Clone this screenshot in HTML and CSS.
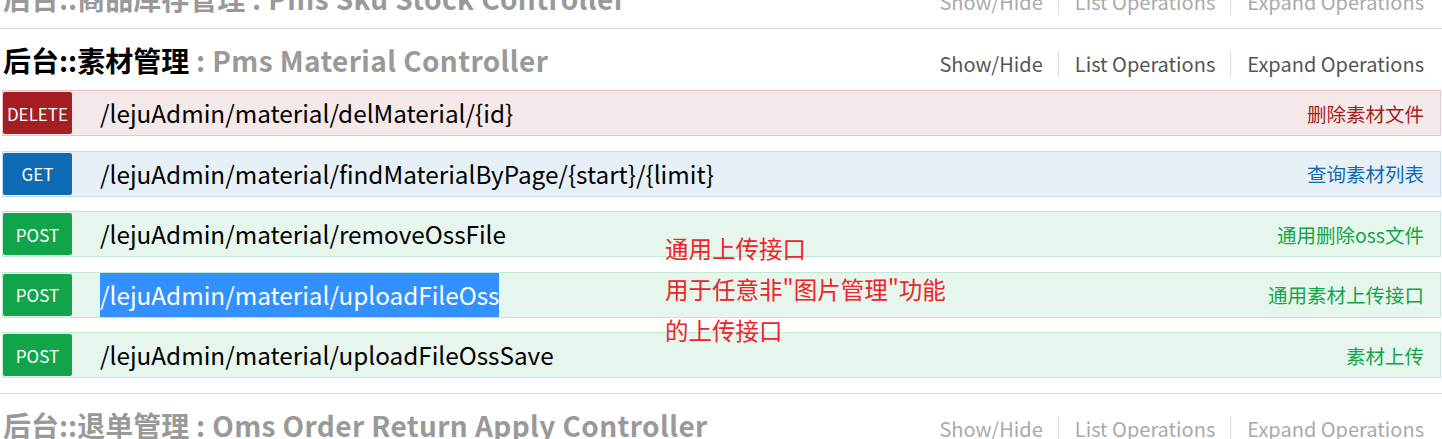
FILE: index.html
```html
<!DOCTYPE html>
<html lang="zh-CN">
<head>
<meta charset="utf-8">
<title>Swagger</title>
<link rel="stylesheet" href="styles.css">
</head>
<body>
<div class="page">
  <section class="resource inactive">
    <div class="heading">
      <h2><span class="name">后台::商品库存管理</span><span class="desc"> : Pms Sku Stock Controller</span></h2>
      <ul class="options">
        <li>Show/Hide</li>
        <li>List Operations</li>
        <li>Expand Operations</li>
      </ul>
    </div>
  </section>

  <section class="resource active">
    <div class="heading">
      <h2><span class="name">后台::素材管理</span><span class="desc"> : Pms Material Controller</span></h2>
      <ul class="options">
        <li>Show/Hide</li>
        <li>List Operations</li>
        <li>Expand Operations</li>
      </ul>
    </div>
    <div class="ops-wrap">
      <ul class="ops">
        <li class="op delete"><span class="method">DELETE</span><span class="path">/lejuAdmin/material/delMaterial/{id}</span><span class="summary">删除素材文件</span></li>
        <li class="op get"><span class="method">GET</span><span class="path">/lejuAdmin/material/findMaterialByPage/{start}/{limit}</span><span class="summary">查询素材列表</span></li>
        <li class="op post"><span class="method">POST</span><span class="path">/lejuAdmin/material/removeOssFile</span><span class="summary">通用删除oss文件</span></li>
        <li class="op post"><span class="method">POST</span><span class="path"><span class="selected">/lejuAdmin/material/uploadFileOss</span></span><span class="summary">通用素材上传接口</span></li>
        <li class="op post"><span class="method">POST</span><span class="path">/lejuAdmin/material/uploadFileOssSave</span><span class="summary">素材上传</span></li>
      </ul>
      <div class="note">通用上传接口<br>用于任意非"图片管理"功能<br>的上传接口</div>
    </div>
  </section>

  <section class="resource inactive">
    <div class="heading">
      <h2><span class="name">后台::退单管理</span><span class="desc"> : Oms Order Return Apply Controller</span></h2>
      <ul class="options">
        <li>Show/Hide</li>
        <li>List Operations</li>
        <li>Expand Operations</li>
      </ul>
    </div>
  </section>
</div>
</body>
</html>
```

FILE: styles.css
```css
html, body {
  margin: 0;
  padding: 0;
  background: #fff;
  overflow: hidden;
}
body {
  font-family: "Noto Sans CJK SC", "Noto Sans", sans-serif;
  color: #000;
}
.page {
  margin-top: -33px;
}
.resource {
  border-bottom: 1px solid #ddd;
}
.heading {
  height: 61px;
  display: flex;
  justify-content: space-between;
  align-items: flex-start;
}
.heading h2 {
  margin: 0;
  padding: 13px 0 0 3px;
  font-size: 28px;
  line-height: 36px;
  font-weight: 700;
  color: #999;
  white-space: nowrap;
}
.heading h2 .desc {
  letter-spacing: 0.4px;
}
.active .heading h2 .name {
  color: #000;
}
.options {
  list-style: none;
  margin: 0;
  padding: 22px 18px 0 0;
  display: flex;
}
.options li {
  font-size: 20px;
  line-height: 26px;
  color: #555;
  padding: 0 15px 0 16px;
  border-left: 1px solid #ddd;
}
.options li:first-child {
  border-left: none;
}
.options li:last-child {
  padding-right: 0;
}
.inactive .options li {
  color: #aaa;
}
.ops-wrap {
  position: relative;
  padding: 0 1px 15px 2px;
}
.ops {
  list-style: none;
  margin: 0;
  padding: 0;
  display: flex;
  flex-direction: column;
  gap: 14.5px;
}
.op {
  height: 46px;
  box-sizing: border-box;
  border: 1px solid;
  display: flex;
  align-items: center;
}
.method {
  width: 69px;
  height: 42px;
  border-radius: 2px;
  color: #fff;
  font-size: 17px;
  display: flex;
  align-items: center;
  justify-content: center;
  flex-shrink: 0;
}
.path {
  margin-left: 28px;
  font-size: 24.3px;
  line-height: 44px;
  flex: 1;
  white-space: nowrap;
}
.selected {
  display: inline-block;
  background: #3390ff;
  color: #fff;
}
.summary {
  font-size: 19.5px;
  padding-right: 16px;
  white-space: nowrap;
}
.delete { background: #f5e8e8; border-color: #e8c6c7; }
.delete .method { background: #a41e22; }
.delete .summary { color: #a41e22; }
.get { background: #e7f0f7; border-color: #c3d9ec; }
.get .method { background: #0f6ab4; }
.get .summary { color: #0f6ab4; }
.post { background: #e7f6ec; border-color: #c3e8d1; }
.post .method { background: #10a54a; }
.post .summary { color: #10a54a; }
.note {
  position: absolute;
  left: 665px;
  top: 138px;
  font-size: 23.5px;
  line-height: 41px;
  color: #ee2228;
  white-space: nowrap;
}
```
